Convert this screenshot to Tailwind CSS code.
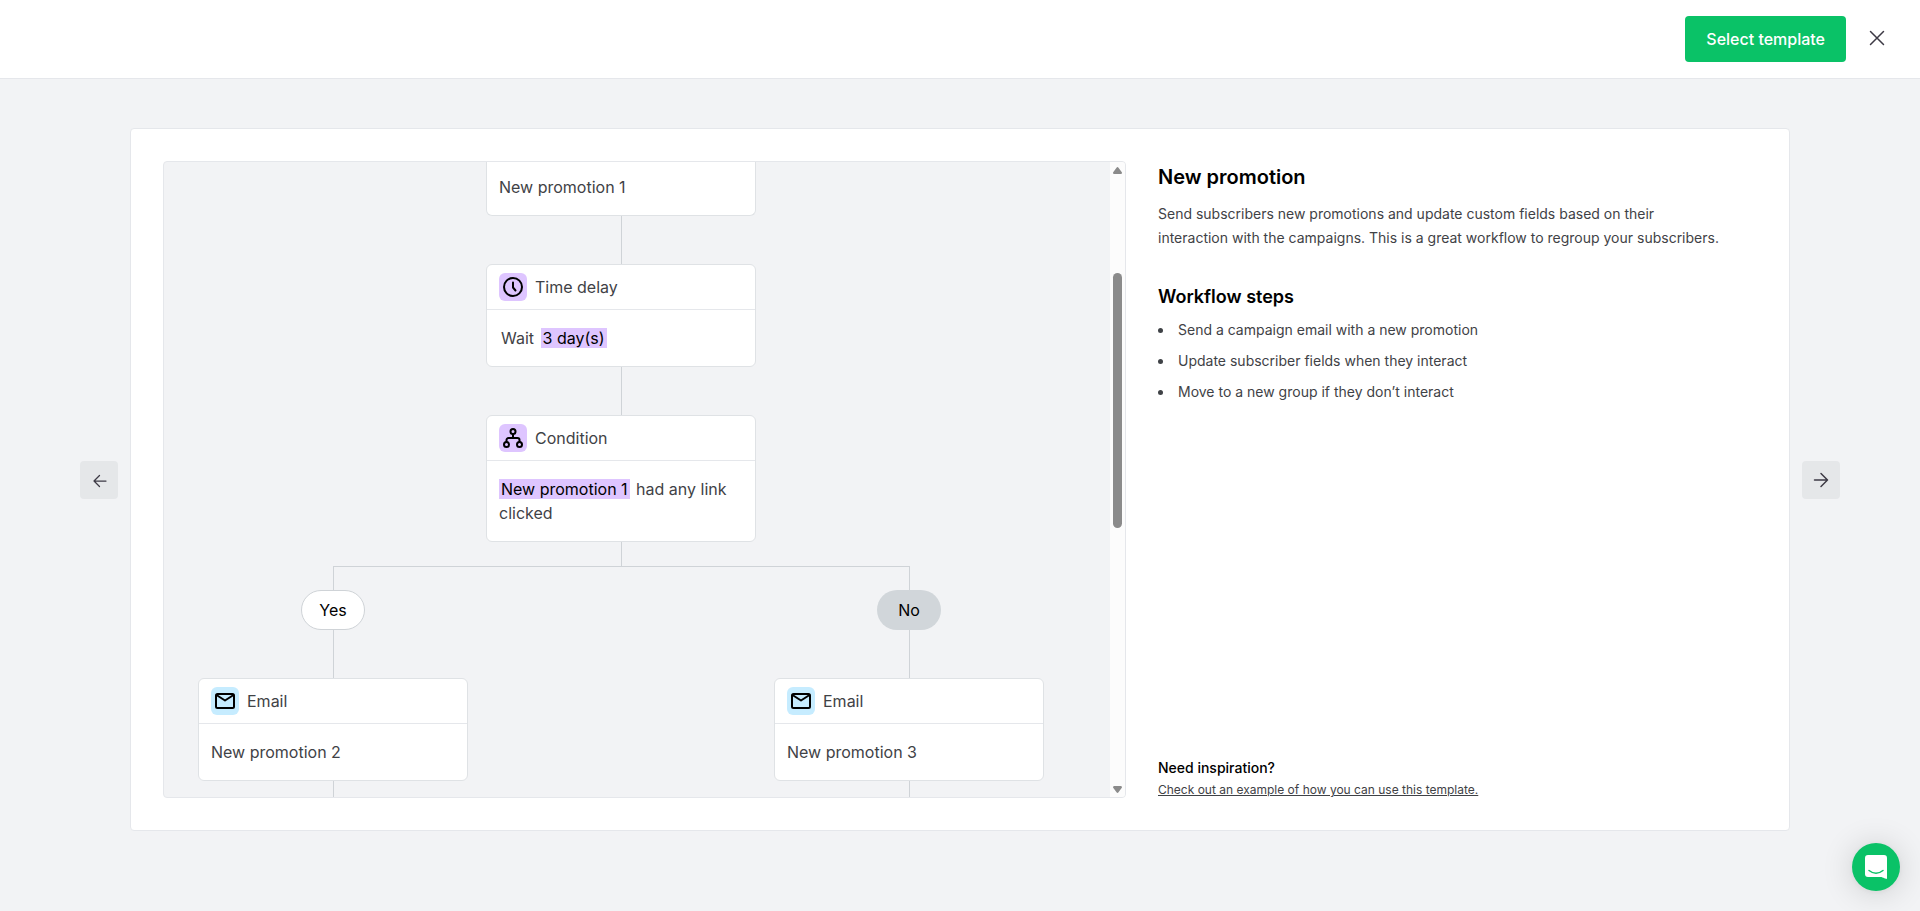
<!DOCTYPE html>
<html lang="en">
<head>
  <meta charset="UTF-8">
  <meta name="viewport" content="width=device-width, initial-scale=1.0">
  <title>New promotion</title>
  <script src="https://cdn.jsdelivr.net/npm/@tailwindcss/browser@4"></script>
</head>
<body class="flex h-screen flex-col bg-[#f2f3f5] font-['Inter',sans-serif] text-[#3f4246]">

  <!-- Header -->
  <header class="flex items-center justify-end gap-[15px] border-b border-[#e5e7eb] bg-white py-4 pr-[27px]">
    <button type="button" class="h-[46px] rounded bg-[#0ac267] px-[21px] text-base font-medium text-white hover:bg-[#09a658]">Select template</button>
    <button type="button" aria-label="Close" class="flex h-8 w-8 items-center justify-center text-[#3d3a45]">
      <svg class="mb-0.5 h-4 w-4" viewBox="0 0 16 16" fill="none" stroke="currentColor" stroke-width="1.5" stroke-linecap="round"><path d="M1.5 1.5l13 13M14.5 1.5l-13 13"/></svg>
    </button>
  </header>

  <main class="flex min-h-0 flex-1 items-stretch gap-3 px-20 pt-[49px] pb-20">
    <button type="button" aria-label="Previous template" class="flex h-[38px] w-[38px] shrink-0 items-center justify-center self-center rounded bg-[#e5e7e9] text-[#3d3a45]">
      <svg class="mt-0.5 ml-0.5 h-4 w-4" viewBox="0 0 16 16" fill="none" stroke="currentColor" stroke-width="1.25" stroke-linecap="round" stroke-linejoin="round"><path d="M14 8H2M7.5 2.5L2 8l5.5 5.5"/></svg>
    </button>

    <div class="flex min-w-0 flex-1 gap-8 rounded border border-[#e5e7eb] bg-white p-8">

      <!-- Workflow preview -->
      <section aria-label="Workflow preview" class="flex w-[963px] min-w-0 overflow-hidden rounded border border-[#e5e7eb] bg-[#f2f3f5]">
        <div class="flex min-w-0 flex-1 flex-col items-center overflow-hidden pr-8">
          <!-- Email 1, header is scrolled out of view -->
          <div class="-mt-[3px] w-[270px] shrink-0 rounded-b-md border-x border-b border-[#dfe2e5] bg-white">
            <p class="px-3 py-4 text-base">New promotion 1</p>
          </div>
          <div class="h-12 w-px shrink-0 bg-[#cfd3d7]"></div>

          <!-- Time delay -->
          <div class="w-[270px] shrink-0 rounded-md border border-[#dfe2e5] bg-white">
            <div class="flex items-center gap-2 border-b border-[#e5e7eb] px-3 py-2">
              <span class="flex h-7 w-7 items-center justify-center rounded-md bg-[#dec5ff] text-black">
                <svg class="h-5 w-5" viewBox="0 0 20 20" fill="none" stroke="currentColor" stroke-width="2" stroke-linecap="round" stroke-linejoin="round"><circle cx="10" cy="10" r="9"/><path d="M10 5.5v5l2.500 3"/></svg>
              </span>
              <span class="text-base">Time delay</span>
            </div>
            <p class="px-3.5 py-4 text-base">Wait <mark class="ml-0.5 bg-[#dec5ff] px-0.5 text-black">3 day(s)</mark></p>
          </div>
          <div class="h-12 w-px shrink-0 bg-[#cfd3d7]"></div>

          <!-- Condition -->
          <div class="w-[270px] shrink-0 rounded-md border border-[#dfe2e5] bg-white">
            <div class="flex items-center gap-2 border-b border-[#e5e7eb] px-3 py-2">
              <span class="flex h-7 w-7 items-center justify-center rounded-md bg-[#dec5ff] text-black">
                <svg class="h-5 w-5" viewBox="0 0 20 20" fill="none" stroke="currentColor" stroke-width="2"><circle cx="10" cy="3.5" r="2.5"/><circle cx="3.5" cy="16.5" r="2.5"/><circle cx="16.5" cy="16.5" r="2.5"/><path d="M10 6v4M3.5 14v-2a2 2 0 0 1 2-2h9a2 2 0 0 1 2 2v2"/></svg>
              </span>
              <span class="text-base">Condition</span>
            </div>
            <p class="px-3 py-4 text-base"><mark class="mr-0.5 bg-[#dec5ff] px-0.5 text-black">New promotion 1</mark> had any link clicked</p>
          </div>
          <div class="h-6 w-px shrink-0 bg-[#cfd3d7]"></div>

          <!-- Branches -->
          <div class="h-6 w-[577px] shrink-0 border-x border-t border-[#cfd3d7]"></div>
          <div class="flex shrink-0 gap-[306px]">
            <div class="flex w-[270px] flex-col items-center">
              <span class="flex h-10 w-16 items-center justify-center rounded-full border border-[#cfd3d7] bg-white text-base text-black">Yes</span>
              <div class="h-12 w-px bg-[#cfd3d7]"></div>
              <div class="w-full rounded-md border border-[#dfe2e5] bg-white">
                <div class="flex items-center gap-2 border-b border-[#e5e7eb] px-3 py-2">
                  <span class="flex h-7 w-7 items-center justify-center rounded-md bg-[#c6ecff] text-black">
                    <svg class="h-5 w-5" viewBox="0 0 20 20" fill="none" stroke="currentColor" stroke-width="2" stroke-linejoin="round"><rect x="1" y="3" width="18" height="14" rx="1.5"/><path d="M1.5 4l8.500 5.500 8.500-5.500"/></svg>
                  </span>
                  <span class="text-base">Email</span>
                </div>
                <p class="px-3 py-4 text-base">New promotion 2</p>
              </div>
              <div class="h-12 w-px bg-[#cfd3d7]"></div>
            </div>
            <div class="flex w-[270px] flex-col items-center">
              <span class="flex h-10 w-16 items-center justify-center rounded-full bg-[#d1d6da] text-base text-black">No</span>
              <div class="h-12 w-px bg-[#cfd3d7]"></div>
              <div class="w-full rounded-md border border-[#dfe2e5] bg-white">
                <div class="flex items-center gap-2 border-b border-[#e5e7eb] px-3 py-2">
                  <span class="flex h-7 w-7 items-center justify-center rounded-md bg-[#c6ecff] text-black">
                    <svg class="h-5 w-5" viewBox="0 0 20 20" fill="none" stroke="currentColor" stroke-width="2" stroke-linejoin="round"><rect x="1" y="3" width="18" height="14" rx="1.5"/><path d="M1.5 4l8.500 5.500 8.500-5.500"/></svg>
                  </span>
                  <span class="text-base">Email</span>
                </div>
                <p class="px-3 py-4 text-base">New promotion 3</p>
              </div>
              <div class="h-12 w-px bg-[#cfd3d7]"></div>
            </div>
          </div>
        </div>

        <!-- Scrollbar -->
        <div class="flex w-[15px] shrink-0 flex-col items-center bg-[#fcfcfc] py-1 text-[#8b8b8b]">
          <svg class="h-2 w-[9px]" viewBox="0 0 9 8" fill="currentColor"><path d="M4.500 1Q5 1 5.500 1.700L9 6.500Q9 8 8 8H1Q0 8 0 6.500L3.500 1.700Q4 1 4.500 1z"/></svg>
          <div class="mt-[99px] h-[255px] w-[9px] rounded-full bg-[#8b8b8b]"></div>
          <svg class="mt-auto h-2 w-[9px]" viewBox="0 0 9 8" fill="currentColor"><path d="M4.500 8Q5 8 5.500 7.300L9 2.500Q9 1 8 1H1Q0 1 0 2.500L3.500 7.300Q4 8 4.500 8z"/></svg>
        </div>
      </section>

      <!-- Template details -->
      <section class="flex min-w-0 flex-1 flex-col">
        <h1 class="text-xl leading-8 font-semibold text-black">New promotion</h1>
        <p class="mt-[9px] text-sm leading-6">Send subscribers new promotions and update custom fields based on their<br>interaction with the campaigns. This is a great workflow to regroup your subscribers.</p>
        <h2 class="mt-[31px] text-lg leading-8 font-semibold text-black">Workflow steps</h2>
        <ul class="mt-[5px] space-y-[7px] text-sm leading-6">
          <li class="flex items-center gap-[15px] before:h-[5px] before:w-[5px] before:rounded-full before:bg-current before:content-['']">Send a campaign email with a new promotion</li>
          <li class="flex items-center gap-[15px] before:h-[5px] before:w-[5px] before:rounded-full before:bg-current before:content-['']">Update subscriber fields when they interact</li>
          <li class="flex items-center gap-[15px] before:h-[5px] before:w-[5px] before:rounded-full before:bg-current before:content-['']">Move to a new group if they don’t interact</li>
        </ul>
        <div class="mt-auto space-y-0.5">
          <h3 class="text-sm leading-6 font-medium text-black">Need inspiration?</h3>
          <a href="#" class="block text-xs leading-4 underline">Check out an example of how you can use this template.</a>
        </div>
      </section>
    </div>

    <button type="button" aria-label="Next template" class="flex h-[38px] w-[38px] shrink-0 items-center justify-center self-center rounded bg-[#e5e7e9] text-[#3d3a45]">
      <svg class="h-4 w-4" viewBox="0 0 16 16" fill="none" stroke="currentColor" stroke-width="1.5" stroke-linecap="round" stroke-linejoin="round"><path d="M1.5 8h13M8 1.5L14.5 8 8 14.5"/></svg>
    </button>
  </main>

  <!-- Chat launcher -->
  <button type="button" aria-label="Open chat" class="fixed right-5 bottom-5 flex h-12 w-12 items-center justify-center rounded-full bg-[#0ac267] shadow-[0_1px_6px_rgba(0,0,0,0.06),0_2px_32px_rgba(0,0,0,0.16)]">
    <svg class="h-6 w-[22px]" viewBox="0 0 22 24"><path d="M3 0h16a3 3 0 0 1 3 3v21s-3-.7-5.500-2H3a3 3 0 0 1-3-3V3a3 3 0 0 1 3-3z" fill="#fff"/><path d="M4 15.500q7 5.500 14 0" fill="none" stroke="#0ac267" stroke-width="1.500" stroke-linecap="round"/></svg>
  </button>
</body>
</html>
